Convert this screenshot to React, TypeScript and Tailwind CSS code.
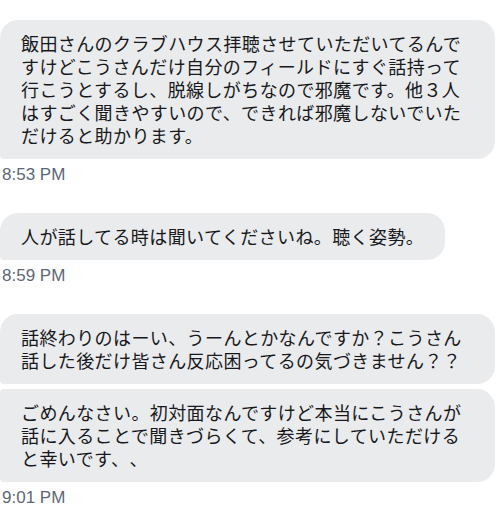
const groups = [
  {
    time: '8:53 PM',
    msgs: [
      {
        wide: true,
        lines: [
          '飯田さんのクラブハウス拝聴させていただいてるんで',
          'すけどこうさんだけ自分のフィールドにすぐ話持って',
          '行こうとするし、脱線しがちなので邪魔です。他３人',
          'はすごく聞きやすいので、できれば邪魔しないでいた',
          'だけると助かります。',
        ],
      },
    ],
  },
  {
    time: '8:59 PM',
    msgs: [{ wide: false, lines: ['人が話してる時は聞いてくださいね。聴く姿勢。'] }],
  },
  {
    time: '9:01 PM',
    msgs: [
      {
        wide: true,
        lines: [
          '話終わりのはーい、うーんとかなんですか？こうさん',
          '話した後だけ皆さん反応困ってるの気づきません？？',
        ],
      },
      {
        wide: true,
        lines: [
          'ごめんなさい。初対面なんですけど本当にこうさんが',
          '話に入ることで聞きづらくて、参考にしていただける',
          'と幸いです、、',
        ],
      },
    ],
  },
];

function Bubble({ lines, wide, first }: { lines: string[]; wide: boolean; first: boolean }) {
  return (
    <div
      className={`bg-[#eaebed] text-[#16181b] text-[18px] leading-[23px] tracking-[0.4px] [text-spacing-trim:space-all] pl-[21px] pr-[21px] py-[12px] rounded-r-[18px] rounded-bl-[4px] whitespace-nowrap ${
        first ? 'rounded-tl-[18px]' : 'rounded-tl-[4px]'
      } ${wide ? 'w-[495px]' : 'w-fit'}`}
      style={{ fontFamily: '"Noto Sans CJK JP", "Noto Sans", sans-serif' }}
    >
      {lines.map((l, i) => (
        <div key={i}>{l}</div>
      ))}
    </div>
  );
}

export default function App() {
  return (
    <div className="w-[500px] h-[513px] bg-white overflow-hidden pt-[20px] flex flex-col gap-[28px]">
      {groups.map((g, gi) => (
        <div key={gi} className="flex flex-col">
          <div className="flex flex-col gap-[5px]">
            {g.msgs.map((m, mi) => (
              <Bubble key={mi} lines={m.lines} wide={m.wide} first={mi === 0} />
            ))}
          </div>
          <div
            className="mt-[6px] pl-[2px] text-[17px] leading-[20px] text-[#5d6777]"
            style={{ fontFamily: '"Liberation Sans", Arial, sans-serif' }}
          >
            {g.time}
          </div>
        </div>
      ))}
    </div>
  );
}
